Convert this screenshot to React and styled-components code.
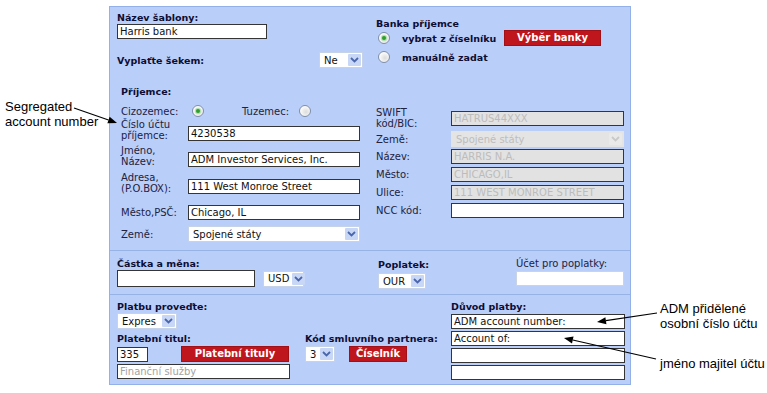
import styled, { createGlobalStyle } from "styled-components";

const GlobalStyle = createGlobalStyle`
  html, body { margin: 0; padding: 0; background: #fff; }
  body { font-family: "DejaVu Sans", Verdana, sans-serif; color: #15153a; }
  * { box-sizing: border-box; }
`;

const Page = styled.div`
  position: relative;
  width: 767px;
  height: 393px;
  display: flex;
  align-items: flex-start;
  overflow: hidden;
`;

const Note = styled.div`
  font-family: "Liberation Sans", Arial, sans-serif;
  font-size: 13px;
  line-height: 15px;
  color: #000;
`;

const NoteLeft = styled(Note)`
  width: 109px;
  padding: 99px 0 0 5px;
`;

const NoteRight = styled.div`
  flex: 1;
  padding: 301px 0 0 29px;
  display: flex;
  flex-direction: column;
  gap: 25px;
`;

const Panel = styled.div`
  margin-top: 6px;
  width: 522px;
  height: 379px;
  border: 1px solid #93b1e8;
  background: #b9cef8;
  display: flex;
  flex-direction: column;
`;

const TopSection = styled.div`
  height: 244px;
  display: flex;
  gap: 13px;
  padding: 0 6px 0 7px;
`;

const Column = styled.div`
  width: ${(p) => p.$w}px;
  display: flex;
  flex-direction: column;
`;

const Sub = styled.div`
  display: flex;
  flex-direction: column;
  padding-left: 4px;
`;

const Title = styled.div`
  font-size: 9.5px;
  font-weight: bold;
  line-height: 11px;
  color: #0d0d33;
  white-space: nowrap;
  margin-top: ${(p) => p.$mt || 0}px;
`;

const Text = styled.span`
  line-height: 11px;
  white-space: nowrap;
  color: ${(p) => (p.$bold ? "#0d0d33" : "#22223f")};
  font-weight: ${(p) => (p.$bold ? "bold" : "normal")};
  font-size: ${(p) => (p.$bold ? "9.5px" : "10px")};
`;

const Input = styled.div`
  width: ${(p) => p.$w}px;
  height: ${(p) => p.$h || 15}px;
  margin-top: ${(p) => p.$mt || 0}px;
  flex-shrink: 0;
  border: 1px solid ${(p) => (p.$light ? "#c9d3e3" : "#353535")};
  background: ${(p) => (p.$disabled ? "#e2e2e2" : "#fff")};
  color: ${(p) => (p.$disabled ? "#bcbcbc" : p.$faint ? "#a3a3a3" : "#111")};
  font-size: 10px;
  line-height: 13px;
  padding-left: 2px;
  white-space: nowrap;
  overflow: hidden;
`;

const SelectBox = styled.div`
  width: ${(p) => p.$w}px;
  height: 16px;
  margin-top: ${(p) => p.$mt || 0}px;
  flex-shrink: 0;
  display: flex;
  align-items: center;
  justify-content: space-between;
  border: 1px solid ${(p) => (p.$disabled ? "#e4e4e4" : "#c5d2e8")};
  background: ${(p) => (p.$disabled ? "#e4e4e4" : "#fff")};
  color: ${(p) => (p.$disabled ? "#bdbdbd" : "#111")};
  font-size: 10px;
  padding: 1px 1px 1px 4px;
  white-space: nowrap;
`;

const SelectArrow = styled.span`
  width: 13px;
  height: 12px;
  margin-left: 3px;
  flex-shrink: 0;
  display: flex;
  align-items: center;
  justify-content: center;
  background: ${(p) => (p.$disabled ? "#e9e9e9" : "#c8d7f6")};
  border-radius: 1px;
`;

function Select({ value, w, mt, disabled }) {
  return (
    <SelectBox $w={w} $mt={mt} $disabled={disabled}>
      <span>{value}</span>
      <SelectArrow $disabled={disabled}>
        <svg width="9" height="6" viewBox="0 0 9 6">
          <path
            d="M1 1 L4.5 4.5 L8 1"
            fill="none"
            stroke={disabled ? "#c9c9c9" : "#4a66ad"}
            strokeWidth="1.8"
          />
        </svg>
      </SelectArrow>
    </SelectBox>
  );
}

const RadioDot = styled.span`
  width: 12px;
  height: 12px;
  border-radius: 50%;
  flex-shrink: 0;
  margin-left: ${(p) => p.$ml || 0}px;
  border: 1px solid #7f8ea8;
  background: radial-gradient(circle at 60% 60%, #dcdcdc 0%, #fff 75%);
  display: flex;
  align-items: center;
  justify-content: center;
  &::after {
    content: "";
    width: 4px;
    height: 4px;
    border-radius: 50%;
    background: ${(p) => (p.$on ? "#2f9e2f" : "transparent")};
    box-shadow: ${(p) => (p.$on ? "0 0 1px 1px #a6dca6" : "none")};
  }
`;

const RedButton = styled.div`
  width: ${(p) => p.$w}px;
  height: 16px;
  margin-left: ${(p) => p.$ml || 0}px;
  flex-shrink: 0;
  background: #bf161d;
  border: 1px solid #a01016;
  color: #fff;
  font-size: 10px;
  font-weight: bold;
  line-height: 14px;
  text-align: center;
  white-space: nowrap;
`;

const Row = styled.div`
  display: flex;
  align-items: ${(p) => p.$align || "center"};
  height: ${(p) => p.$h}px;
  margin-top: ${(p) => p.$mt || 0}px;
`;

const SpaceRow = styled(Row)`
  justify-content: space-between;
`;

const FieldLabel = styled.div`
  width: ${(p) => p.$w}px;
  flex-shrink: 0;
  font-size: 10px;
  line-height: 11px;
  color: #22223f;
  align-self: ${(p) => (p.$top ? "flex-start" : "center")};
`;

const Slot = styled.div`
  width: ${(p) => p.$w}px;
  flex-shrink: 0;
  display: flex;
  align-items: center;
`;

const Section = styled.div`
  border-top: 1px solid #97b3e6;
  display: flex;
  padding-left: 7px;
  height: ${(p) => p.$h}px;
`;

const Stack = styled.div`
  width: ${(p) => p.$w}px;
  display: flex;
  flex-direction: column;
  gap: ${(p) => p.$gap || 0}px;
`;

const Arrows = styled.svg`
  position: absolute;
  left: 0;
  top: 0;
  pointer-events: none;
`;

function Arrow({ x1, y1, x2, y2 }) {
  const a = Math.atan2(y2 - y1, x2 - x1);
  const len = 9;
  const wdt = 3.5;
  const bx = x2 - len * Math.cos(a);
  const by = y2 - len * Math.sin(a);
  const px = -Math.sin(a) * wdt;
  const py = Math.cos(a) * wdt;
  return (
    <g>
      <line x1={x1} y1={y1} x2={bx} y2={by} stroke="#000" strokeWidth="1.2" />
      <polygon
        points={`${x2},${y2} ${bx + px},${by + py} ${bx - px},${by - py}`}
        fill="#000"
      />
    </g>
  );
}

export default function App() {
  return (
    <>
      <GlobalStyle />
      <Page>
        <NoteLeft>
          Segregated
          <br />
          account number
        </NoteLeft>

        <Panel>
          <TopSection>
            <Column $w={246}>
              <Title $mt={5}>Název šablony:</Title>
              <Input $w={150} $mt={1}>Harris bank</Input>
              <SpaceRow $h={16} $mt={13}>
                <Title>Vyplaťte šekem:</Title>
                <Select value="Ne" w={44} />
              </SpaceRow>

              <Sub>
                <Title $mt={18}>Příjemce:</Title>
                <Row $h={14} $mt={7}>
                  <Slot $w={71}>
                    <Text>Cizozemec:</Text>
                  </Slot>
                  <Slot $w={50}>
                    <RadioDot $on />
                  </Slot>
                  <Slot $w={57}>
                    <Text>Tuzemec:</Text>
                  </Slot>
                  <RadioDot />
                </Row>

                <Row $h={22} $mt={1} $align="flex-end">
                  <FieldLabel $w={67} $top>
                    Číslo účtu
                    <br />
                    příjemce:
                  </FieldLabel>
                  <Input $w={172}>4230538</Input>
                </Row>
                <Row $h={22} $mt={4} $align="flex-end">
                  <FieldLabel $w={67} $top>
                    Jméno,
                    <br />
                    Název:
                  </FieldLabel>
                  <Input $w={172}>ADM Investor Services, Inc.</Input>
                </Row>
                <Row $h={22} $mt={5} $align="flex-end">
                  <FieldLabel $w={67} $top>
                    Adresa,
                    <br />
                    (P.O.BOX):
                  </FieldLabel>
                  <Input $w={172}>111 West Monroe Street</Input>
                </Row>
                <Row $h={15} $mt={11}>
                  <FieldLabel $w={67}>Město,PSČ:</FieldLabel>
                  <Input $w={172}>Chicago, IL</Input>
                </Row>
                <Row $h={16} $mt={6}>
                  <FieldLabel $w={67}>Země:</FieldLabel>
                  <Select value="Spojené státy" w={172} />
                </Row>
              </Sub>
            </Column>

            <Column $w={248}>
              <Title $mt={11}>Banka příjemce</Title>
              <Row $h={16} $mt={1}>
                <Slot $w={26}>
                  <RadioDot $on $ml={2} />
                </Slot>
                <Slot $w={102}>
                  <Text $bold>vybrat z číselníku</Text>
                </Slot>
                <RedButton $w={97}>Výběr banky</RedButton>
              </Row>
              <Row $h={14} $mt={4}>
                <Slot $w={26}>
                  <RadioDot $ml={2} />
                </Slot>
                <Text $bold>manuálně zadat</Text>
              </Row>

              <Row $h={22} $mt={43}>
                <FieldLabel $w={75}>
                  SWIFT
                  <br />
                  kód/BIC:
                </FieldLabel>
                <Input $w={173} $disabled>
                  HATRUS44XXX
                </Input>
              </Row>
              <Row $h={16} $mt={2}>
                <FieldLabel $w={75}>Země:</FieldLabel>
                <Select value="Spojené státy" w={173} disabled />
              </Row>
              <Row $h={15} $mt={2}>
                <FieldLabel $w={75}>Název:</FieldLabel>
                <Input $w={173} $disabled>
                  HARRIS N.A.
                </Input>
              </Row>
              <Row $h={15} $mt={3}>
                <FieldLabel $w={75}>Město:</FieldLabel>
                <Input $w={173} $disabled>
                  CHICAGO,IL
                </Input>
              </Row>
              <Row $h={15} $mt={3}>
                <FieldLabel $w={75}>Ulice:</FieldLabel>
                <Input $w={173} $disabled>
                  111 WEST MONROE STREET
                </Input>
              </Row>
              <Row $h={15} $mt={3}>
                <FieldLabel $w={75}>NCC kód:</FieldLabel>
                <Input $w={173} />
              </Row>
            </Column>
          </TopSection>

          <Section $h={44}>
            <Stack $w={261}>
              <Title $mt={7}>Částka a měna:</Title>
              <Row $h={17} $mt={1}>
                <Input $w={138} $h={17} />
                <Slot $w={8} />
                <Select value="USD" w={41} />
              </Row>
            </Stack>
            <Stack $w={138}>
              <Title $mt={8}>Poplatek:</Title>
              <Select value="OUR" w={48} mt={3} />
            </Stack>
            <Stack $w={108}>
              <Text style={{ marginTop: 7 }}>Účet pro poplatky:</Text>
              <Input $w={108} $light $mt={2} />
            </Stack>
          </Section>

          <Section $h={90}>
            <Stack $w={334}>
              <Title $mt={6}>Platbu proveďte:</Title>
              <Select value="Expres" w={60} mt={1} />
              <Row $h={11} $mt={4}>
                <Slot $w={188}>
                  <Title>Platební titul:</Title>
                </Slot>
                <Title>Kód smluvního partnera:</Title>
              </Row>
              <Row $h={16} $mt={2}>
                <Slot $w={188}>
                  <Input $w={31}>335</Input>
                  <RedButton $w={108} $ml={33}>
                    Platební tituly
                  </RedButton>
                </Slot>
                <Select value="3" w={30} />
                <RedButton $w={58} $ml={14}>
                  Číselník
                </RedButton>
              </Row>
              <Input $w={173} $mt={2} $faint>
                Finanční služby
              </Input>
            </Stack>
            <Stack $w={174} $gap={2}>
              <Title $mt={6}>Důvod platby:</Title>
              <Input $w={174}>ADM account number:</Input>
              <Input $w={174}>Account of:</Input>
              <Input $w={174} />
              <Input $w={174} />
            </Stack>
          </Section>
        </Panel>

        <NoteRight>
          <Note>
            ADM přidělené
            <br />
            osobní číslo účtu
          </Note>
          <Note>jméno majitel účtu</Note>
        </NoteRight>

        <Arrows width="767" height="393">
          <Arrow x1={74} y1={108} x2={117} y2={123} />
          <Arrow x1={657} y1={313} x2={597} y2={322} />
          <Arrow x1={656} y1={359} x2={564} y2={338} />
        </Arrows>
      </Page>
    </>
  );
}
